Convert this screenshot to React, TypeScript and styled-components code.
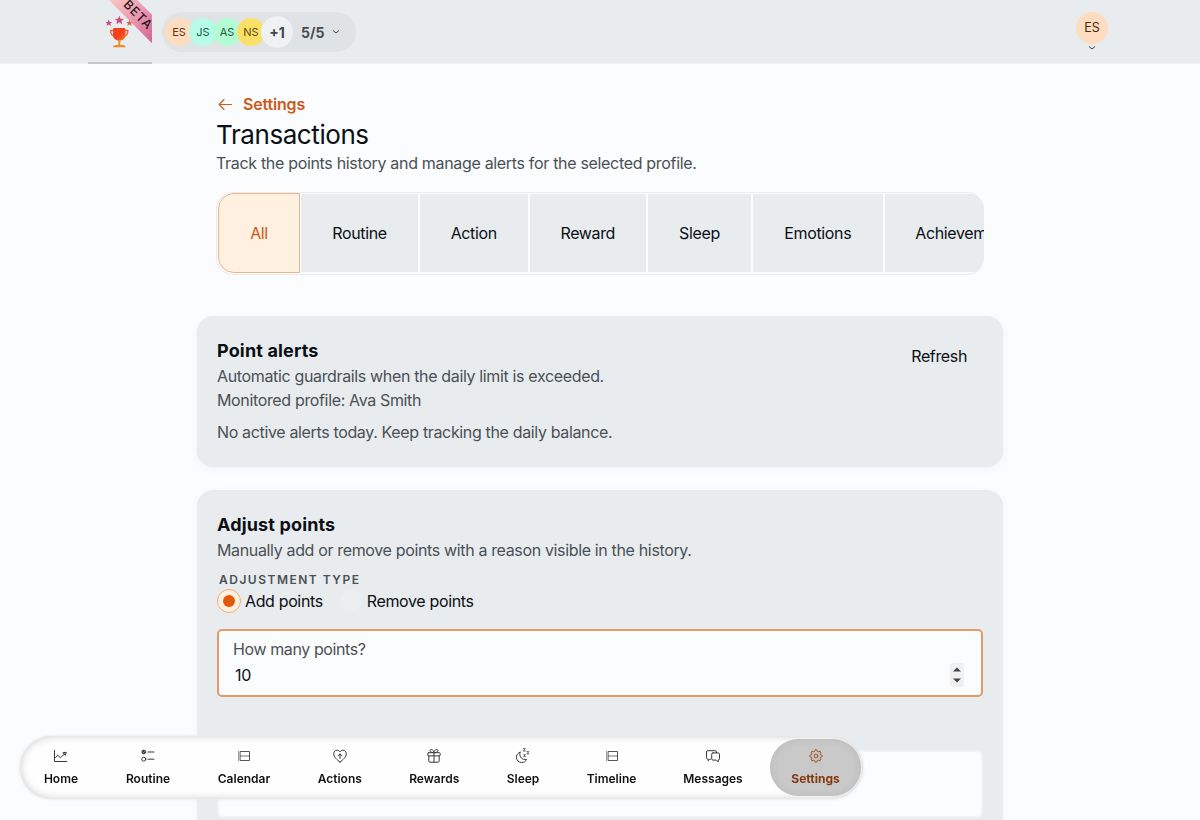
import React from 'react';
import styled, { createGlobalStyle, css } from 'styled-components';

const Global = createGlobalStyle`
  *, *::before, *::after { box-sizing: border-box; }
  html, body { margin: 0; height: 100%; overflow: hidden; }
  body {
    background: #fafcfe;
    color: #0b0f14;
    font-family: Inter, "Liberation Sans", sans-serif;
    font-size: 16px;
    line-height: 24px;
    letter-spacing: -0.36px;
  }
  h1, h2, p { margin: 0; }
  button { font: inherit; letter-spacing: inherit; color: inherit; border: 0; background: none; padding: 0; }
`;

const Header = styled.header`
  height: 64px;
  padding: 0 88px;
  display: flex;
  align-items: flex-start;
  background: #e8ecef;
  border-bottom: 1px solid #f1f4f6;
`;

const LogoTile = styled.a`
  position: relative;
  width: 64px;
  height: 64px;
  overflow: hidden;
  border-bottom: 2px solid #c6c9cc;
  svg { display: block; margin: 14px 0 0 16px; }
`;

const Ribbon = styled.span`
  position: absolute;
  top: 5px;
  left: 2px;
  width: 96px;
  height: 20px;
  transform: rotate(45deg);
  background: linear-gradient(90deg, #fbd3c4 10%, #eda0b4 45%, #cf5c92 85%);
  color: #26181e;
  font-size: 12.5px;
  font-weight: 500;
  line-height: 20px;
  letter-spacing: 0.9px;
  text-align: center;
`;

const Members = styled.button`
  display: flex;
  align-items: center;
  width: 194px;
  height: 40px;
  margin: 12px 0 0 10px;
  padding-left: 3px;
  border-radius: 20px;
  background: #dfe3e6;
`;

const Avatar = styled.span<{ $bg: string; $fg: string; $size?: number }>`
  display: grid;
  place-items: center;
  flex: none;
  width: ${p => p.$size ?? 28}px;
  height: ${p => p.$size ?? 28}px;
  border-radius: 50%;
  background: ${p => p.$bg};
  color: ${p => p.$fg};
  font-size: 11px;
  line-height: 1;
  letter-spacing: 0;
  & + & { margin-left: -4px; }
`;

const More = styled(Avatar)`
  padding-top: 2px;
  font-size: 14px;
  font-weight: 700;
`;

const Count = styled.span`
  margin: 2px 8px 0 8px;
  color: #474b50;
  font-size: 14px;
  font-weight: 700;
  letter-spacing: 0;
`;

const Account = styled.button`
  display: flex;
  flex-direction: column;
  align-items: center;
  margin: 12px 4px 0 auto;
  span { font-size: 12.5px; }
  svg { margin-top: 1px; }
`;

const Main = styled.main`
  width: 806px;
  margin: 0 auto;
  padding-top: 28px;
`;

const Intro = styled.section`
  padding: 0 19px;
`;

const BackLink = styled.a`
  display: flex;
  align-items: center;
  gap: 10px;
  height: 24px;
  padding-left: 2px;
  color: #cf5818;
  font-weight: 600;
  letter-spacing: -0.18px;
`;

const Title = styled.h1`
  margin-top: 2px;
  font-size: 26px;
  line-height: 33px;
  font-weight: 400;
  letter-spacing: -0.42px;
`;

const Muted = styled.p<{ $top?: number; $track?: number }>`
  margin-top: ${p => p.$top ?? 0}px;
  color: #4b5055;
  letter-spacing: ${p => p.$track ?? -0.35}px;
`;

const Tabs = styled.div`
  display: flex;
  width: 768px;
  height: 83px;
  margin-top: 17px;
  padding: 0 1px 1px;
  overflow: hidden;
  border: 1px solid #e8ecef;
  border-right: 0;
  border-radius: 17px;
`;

const Tab = styled.button<{ $w: number; $active?: boolean }>`
  flex: none;
  width: ${p => p.$w}px;
  border: 1px solid #fafcfe;
  background: #e8ecef;
  ${p => p.$active && css`
    border-color: #eeb48c;
    border-radius: 16px 0 0 16px;
    background: #fff0e0;
    color: #cf5818;
  `}
`;

const Card = styled.section<{ $h: number; $top: number }>`
  height: ${p => p.$h}px;
  margin-top: ${p => p.$top}px;
  padding: 22px 20px;
  border-radius: 16px;
  background: #e8ecef;
  box-shadow: 0 2px 8px rgba(30, 50, 70, 0.04);
`;

const CardHead = styled.div`
  display: flex;
  justify-content: space-between;
`;

const CardTitle = styled.h2`
  font-size: 18px;
  line-height: 26px;
  font-weight: 700;
  letter-spacing: 0.15px;
`;

const Refresh = styled.button`
  height: 36px;
  padding: 0 16px;
`;

const Legend = styled.div`
  margin: 10px 0 0 2px;
  color: #4b5055;
  font-size: 12px;
  line-height: 16px;
  font-weight: 600;
  letter-spacing: 1.5px;
`;

const Radios = styled.div`
  display: flex;
  gap: 16px;
  margin-top: 1px;
`;

const RadioLabel = styled.label`
  display: flex;
  align-items: center;
  gap: 4px;
`;

const Dot = styled.span<{ $on?: boolean }>`
  display: grid;
  place-items: center;
  width: 24px;
  height: 24px;
  border-radius: 50%;
  border: 1px solid ${p => (p.$on ? '#f3ab78' : '#e9edf0')};
  background: ${p => (p.$on ? '#fff0e0' : '#ebeff2')};
  &::after {
    content: '';
    width: 12px;
    height: 12px;
    border-radius: 50%;
    background: ${p => (p.$on ? '#e4580c' : 'transparent')};
  }
`;

const Field = styled.div<{ $focus?: boolean; $top: number }>`
  display: flex;
  justify-content: space-between;
  height: 68px;
  margin-top: ${p => p.$top}px;
  padding: 6px 17px 0 14px;
  border: 2px solid ${p => (p.$focus ? '#e29a6a' : '#f1f4f6')};
  border-radius: 5px;
  background: #fbfcfd;
`;

const FieldLabel = styled.div`
  color: #4b5055;
  letter-spacing: -0.4px;
`;

const FieldValue = styled.div`
  margin: 2px 0 0 2px;
`;

const Spinner = styled.span`
  display: grid;
  place-items: center;
  width: 14px;
  height: 24px;
  margin-top: 26px;
  border-radius: 3px;
  background: #f0f0f0;
`;

const Dock = styled.nav`
  position: fixed;
  left: 20px;
  top: 736px;
  display: flex;
  gap: 8px;
  height: 63px;
  padding: 3px 2px 3px 4px;
  border-radius: 32px;
  background: #fefefe;
  box-shadow: inset 0 0 8px rgba(0, 0, 0, 0.2), 0 0 2px 1px rgba(235, 236, 238, 0.9);
`;

const DockItem = styled.a<{ $w: number; $active?: boolean }>`
  display: flex;
  flex-direction: column;
  align-items: center;
  width: ${p => p.$w}px;
  height: 57px;
  padding-top: 9px;
  border-radius: 29px;
  color: #111;
  font-size: 12px;
  line-height: 16px;
  font-weight: 600;
  letter-spacing: 0;
  svg { color: #3a3a3a; margin-bottom: 7px; }
  ${p => p.$active && css`
    background: #c9c9c9;
    box-shadow: inset 0 0 8px rgba(0, 0, 0, 0.08);
    color: #85380f;
    font-weight: 700;
    svg { color: #a04a1c; }
  `}
`;

const Glyph = ({ children }: { children: React.ReactNode }) => (
  <svg width="16" height="16" viewBox="0 0 16 16" fill="none" stroke="currentColor" strokeWidth="1" strokeLinecap="round" strokeLinejoin="round">
    {children}
  </svg>
);

const ListRows = (
  <Glyph>
    <path d="M4.500 3.500h9v9h-9z" strokeWidth=".85" />
    <path d="M4.500 8h9" strokeWidth=".7" />
    <path d="M2.500 3.500v9.200" strokeDasharray="1 1" strokeWidth="1" strokeLinecap="butt" />
  </Glyph>
);

const gear = Array.from({ length: 64 }, (_, i) => {
  const a = (i / 64) * Math.PI * 2;
  const r = 5.4 + 0.85 * Math.tanh(2.5 * Math.cos(a * 8));
  return `${i ? 'L' : 'M'}${(8 + r * Math.sin(a)).toFixed(2)} ${(8 - r * Math.cos(a)).toFixed(2)}`;
}).join('') + 'Z';

const items: { label: string; w: number; icon: React.ReactNode; active?: boolean }[] = [
  {
    label: 'Home', w: 74,
    icon: <Glyph><path d="M1.500 2.500v11h12.300M2.500 9.500l2.200-2.300 2.600 2.500 5-4.400M10.300 4.700l2.900-.5-.6 2.800z" /></Glyph>,
  },
  {
    label: 'Routine', w: 84,
    icon: <Glyph><circle cx="3.800" cy="4" r="1.900" fill="currentColor" /><circle cx="3.800" cy="11.200" r="2" /><path d="M8 4h6M8 11.200h6" /><path d="M3 4l.7.7 1.200-1.400" stroke="#fff" strokeWidth=".5" /></Glyph>,
  },
  { label: 'Calendar', w: 92, icon: ListRows },
  {
    label: 'Actions', w: 83.5,
    icon: <Glyph><path d="M8 14C5 11.800 1.700 9 1.700 5.800C1.700 3.700 3.200 2.200 5 2.200c1.300 0 2.400.7 3 1.800.6-1.100 1.700-1.800 3-1.800 1.800 0 3.300 1.500 3.300 3.600C14.300 9 11 11.800 8 14zM8 10.500V6M6 7.900l2-2 2 2" /></Glyph>,
  },
  {
    label: 'Rewards', w: 89.5,
    icon: <Glyph><rect x="1.800" y="4.700" width="12.400" height="3.200" rx=".8" /><path d="M2.800 7.900v5c0 .8.400 1.300 1.200 1.300h8c.8 0 1.200-.5 1.200-1.300v-5M8 4.700v9.500M8 4.600C5.500 4.600 4 4 4 2.700 4 .9 7.600 1 8 4.600 8.400 1 12 .9 12 2.700c0 1.300-1.500 1.900-4 1.900" /></Glyph>,
  },
  {
    label: 'Sleep', w: 72,
    icon: <Glyph><path d="M5 4.200C2.700 5 1.400 7 1.400 9.200c0 3 2.300 5.300 5.200 5.300 2.300 0 4.200-1.100 5-3.300C7.900 12.400 3.600 9.500 5 4.200z" /><path d="M8.300.6h2L8.300 3h2M12 3.600h1.800L12 5.800h1.800M8.800 6.600h1.600L8.800 8.500h1.600" strokeWidth=".8" /></Glyph>,
  },
  { label: 'Timeline', w: 89, icon: ListRows },
  {
    label: 'Messages', w: 98,
    icon: <Glyph><path d="M5.500 11.200H4.700l-1.500 1.600v-1.700H2.800c-.9 0-1.300-.5-1.300-1.300V4c0-.8.400-1.300 1.300-1.300h7.400c.8 0 1.300.5 1.300 1.300v.6" /><path d="M8 4.900h5.200c.8 0 1.300.5 1.300 1.300v4.600c0 .8-.5 1.300-1.300 1.300v1.800l-1.800-1.800H8c-.8 0-1.300-.5-1.300-1.300V6.200c0-.8.5-1.300 1.300-1.300z" /></Glyph>,
  },
  {
    label: 'Settings', w: 91, active: true,
    icon: <Glyph><path d={gear} /><circle cx="8" cy="8" r="1.900" /></Glyph>,
  },
];

const tabs: [string, number][] = [
  ['All', 82], ['Routine', 119], ['Action', 109.5], ['Reward', 118.5], ['Sleep', 105], ['Emotions', 131.5], ['Achievements', 166],
];

const star = 'M0-4 1.100-1.300 4-1.200 1.800.6 2.600 3.400 0 1.800-2.600 3.400-1.800.6-4-1.200-1.100-1.300z';

const Chevron = () => (
  <svg width="8" height="6" viewBox="0 0 8 6" fill="none" stroke="#3f4347" strokeWidth="1"><path d="M1 1.500l3 2.500 3-2.500" /></svg>
);

export default function App() {
  return (
    <>
      <Global />
      <Header>
        <LogoTile>
          <svg width="30" height="36" viewBox="0 0 30 36">
            <defs>
              <linearGradient id="cup" x1="0" y1="0" x2="1" y2="1">
                <stop offset="0" stopColor="#f5451d" /><stop offset=".5" stopColor="#f23c1f" /><stop offset="1" stopColor="#f5801f" />
              </linearGradient>
            </defs>
            <g fill="#d6467c">
              <path d={star} transform="translate(4.800 9) scale(.85)" />
              <path d={star} transform="translate(15.300 6.300) scale(1.150)" />
              <path d={star} transform="translate(25.500 9) scale(.85)" fill="#e0603f" />
            </g>
            <path d="M9 16.500H6.700c0 4 1.300 5.700 4.300 5.900M21.500 16.500h2.300c0 4-1.300 5.700-4.300 5.900" fill="none" stroke="#f2602a" strokeWidth="1.400" />
            <path d="M9 15.500c0-1 .6-1.500 1.500-1.500h9.500c.9 0 1.500.5 1.500 1.500v5c0 3.900-2.500 6.200-6.200 6.200S9 24.400 9 20.500z" fill="url(#cup)" />
            <path d="M14.300 26h2v5h2.500c1.500 0 2.700.8 2.900 2.300H9c.2-1.500 1.400-2.300 2.900-2.300h2.400z" fill="#f08a24" />
          </svg>
          <Ribbon>BETA</Ribbon>
        </LogoTile>
        <Members>
          <Avatar $bg="#fddcbf" $fg="#5f3410">ES</Avatar>
          <Avatar $bg="#b5fbe6" $fg="#16594a">JS</Avatar>
          <Avatar $bg="#b3fbd3" $fg="#17603a">AS</Avatar>
          <Avatar $bg="#fbe067" $fg="#5b4a0c">NS</Avatar>
          <More $bg="#eff1f4" $fg="#43474b" $size={32}>+1</More>
          <Count>5/5</Count>
          <Chevron />
        </Members>
        <Account>
          <Avatar $bg="#fddcbf" $fg="#4a2c10" $size={32}>ES</Avatar>
          <Chevron />
        </Account>
      </Header>
      <Main>
        <Intro>
          <BackLink>
            <svg width="15" height="14" viewBox="0 0 15 14" fill="none" stroke="currentColor" strokeWidth="1.100" strokeLinecap="round" strokeLinejoin="round"><path d="M13.500 7.500H1.200M6 2.500l-4.800 5 4.800 5" /></svg>
            Settings
          </BackLink>
          <Title>Transactions</Title>
          <Muted $track={-0.32}>Track the points history and manage alerts for the selected profile.</Muted>
          <Tabs>
            {tabs.map(([label, w], i) => <Tab key={label} $w={w} $active={i === 0}>{label}</Tab>)}
          </Tabs>
        </Intro>
        <Card $h={151} $top={41}>
          <CardHead>
            <div>
              <CardTitle>Point alerts</CardTitle>
              <Muted>Automatic guardrails when the daily limit is exceeded.</Muted>
              <Muted>Monitored profile: Ava Smith</Muted>
            </div>
            <Refresh>Refresh</Refresh>
          </CardHead>
          <Muted $top={8}>No active alerts today. Keep tracking the daily balance.</Muted>
        </Card>
        <Card $h={420} $top={23}>
          <CardTitle>Adjust points</CardTitle>
          <Muted>Manually add or remove points with a reason visible in the history.</Muted>
          <Legend>ADJUSTMENT TYPE</Legend>
          <Radios>
            <RadioLabel><Dot $on />Add points</RadioLabel>
            <RadioLabel><Dot />Remove points</RadioLabel>
          </Radios>
          <Field $focus $top={16}>
            <div>
              <FieldLabel>How many points?</FieldLabel>
              <FieldValue>10</FieldValue>
            </div>
            <Spinner>
              <svg width="8" height="16" viewBox="0 0 8 16" fill="#444"><path d="M0 4.500L4 .5l4 4zM0 11.500l4 4 4-4z" /></svg>
            </Spinner>
          </Field>
          <Field $top={53} />
        </Card>
      </Main>
      <Dock>
        {items.map(it => (
          <DockItem key={it.label} $w={it.w} $active={it.active}>{it.icon}{it.label}</DockItem>
        ))}
      </Dock>
    </>
  );
}
